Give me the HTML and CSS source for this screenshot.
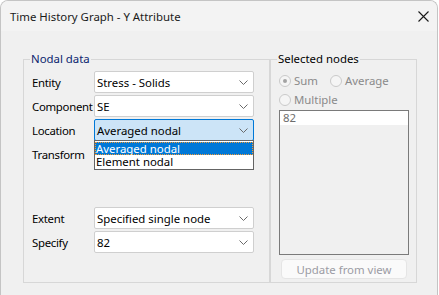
FILE: index.html
```html
<!DOCTYPE html>
<html>
<head>
    <title>Time History Graph - Y Attribute</title>
    <link rel="stylesheet" href="styles.css">
</head>
<body>
    <div class="window">
        <div class="titlebar">
            <span class="title">Time History Graph - Y Attribute</span>
            <svg class="close" width="11" height="11" viewBox="0 0 11 11">
                <path d="M0.5 0.5 L10.5 10.5 M10.5 0.5 L0.5 10.5" stroke="#1a1a1a" stroke-width="1.1" fill="none"/>
            </svg>
        </div>
        <div class="client">
            <fieldset class="group nodal">
                <legend>Nodal data</legend>
                <div class="row">
                    <label>Entity</label>
                    <div class="combo"><span>Stress - Solids</span><svg class="chev" width="9" height="5" viewBox="0 0 9 5"><path d="M0.5 0.5 L4.5 4.5 L8.5 0.5" stroke="#6a6a6a" fill="none"/></svg></div>
                </div>
                <div class="row">
                    <label>Component</label>
                    <div class="combo"><span>SE</span><svg class="chev" width="9" height="5" viewBox="0 0 9 5"><path d="M0.5 0.5 L4.5 4.5 L8.5 0.5" stroke="#6a6a6a" fill="none"/></svg></div>
                </div>
                <div class="row">
                    <label>Location</label>
                    <div class="combo focused"><span>Averaged nodal</span><svg class="chev" width="9" height="5" viewBox="0 0 9 5"><path d="M0.5 0.5 L4.5 4.5 L8.5 0.5" stroke="#6a6a6a" fill="none"/></svg>
                        <div class="droplist">
                            <div class="item selected">Averaged nodal</div>
                            <div class="item">Element nodal</div>
                        </div>
                    </div>
                </div>
                <div class="row">
                    <label>Transform</label>
                </div>
                <div class="spacer"></div>
                <div class="row">
                    <label>Extent</label>
                    <div class="combo"><span>Specified single node</span><svg class="chev" width="9" height="5" viewBox="0 0 9 5"><path d="M0.5 0.5 L4.5 4.5 L8.5 0.5" stroke="#6a6a6a" fill="none"/></svg></div>
                </div>
                <div class="row">
                    <label>Specify</label>
                    <div class="combo"><span>82</span><svg class="chev" width="9" height="5" viewBox="0 0 9 5"><path d="M0.5 0.5 L4.5 4.5 L8.5 0.5" stroke="#6a6a6a" fill="none"/></svg></div>
                </div>
            </fieldset>
            <fieldset class="group selected-nodes">
                <legend>Selected nodes</legend>
                <div class="radios">
                    <span class="radio checked"><i></i>Sum</span>
                    <span class="radio"><i></i>Average</span>
                </div>
                <div class="radios">
                    <span class="radio"><i></i>Multiple</span>
                </div>
                <div class="listbox">
                    <div class="list-item">82</div>
                </div>
                <button disabled>Update from view</button>
            </fieldset>
        </div>
    </div>
</body>
</html>
```

FILE: styles.css
```css
body {
    margin: 0;
    background: #fff;
    font-family: "Noto Sans", "Open Sans", sans-serif;
    font-size: 11.4px;
    color: #000;
}
.window {
    width: 438px;
    height: 295px;
    box-sizing: border-box;
    background: #f0f0f0;
    border: 1px solid #c4c4c4;
    border-bottom: none;
    border-radius: 8px 8px 0 0;
    overflow: hidden;
}
.titlebar {
    height: 30px;
    background: #f3f3f3;
    display: flex;
    align-items: center;
    justify-content: space-between;
    padding: 0 8px 0 9px;
}
.title {
    font-size: 11.4px;
    color: #1a1a1a;
}
.client {
    display: flex;
    padding: 20px 0 0 22px;
}
.group {
    margin: 0;
    box-sizing: border-box;
    border: 1px solid #d7d7d7;
    padding: 0 0 0 6px;
    height: 232px;
}
.group legend {
    padding: 0 1px;
    line-height: 16px;
}
.nodal {
    width: 247px;
    padding-top: 4px;
}
.nodal legend {
    color: #0a1e6e;
}
.row {
    display: flex;
    align-items: center;
    margin-bottom: 2px;
    min-height: 22px;
}
.row label {
    width: 62px;
    padding-left: 2px;
    white-space: nowrap;
    letter-spacing: -0.3px;
}
.combo {
    position: relative;
    width: 160px;
    height: 22px;
    box-sizing: border-box;
    background: #fff;
    border: 1px solid #cfcfcf;
    border-radius: 2px;
    display: flex;
    align-items: center;
    justify-content: space-between;
    padding: 0 5px 0 2px;
}
.combo.focused {
    background: #cce4f7;
    border-color: #0078d7;
    z-index: 2;
}
.chev {
    margin-left: auto;
}
.droplist {
    position: absolute;
    top: 20px;
    left: -1px;
    width: 160px;
    box-sizing: border-box;
    background: #fff;
    border: 1px solid #646464;
    padding: 1px 0;
}
.item {
    line-height: 13px;
    height: 13px;
    padding-left: 1px;
}
.item.selected {
    background: #0078d7;
    color: #fff;
    outline: 1px dotted #f39b35;
    outline-offset: -1px;
}
.spacer {
    height: 40px;
}
.selected-nodes {
    width: 147px;
    padding-top: 4px;
}
.radios {
    display: flex;
    gap: 12px;
    margin-left: 2px;
    height: 19px;
    align-items: center;
}
.radio {
    display: flex;
    align-items: center;
    gap: 3px;
    color: #8a8a8a;
}
.radio i {
    width: 12px;
    height: 12px;
    box-sizing: border-box;
    border: 1px solid #cacaca;
    border-radius: 50%;
    background: #f5f5f5;
    display: flex;
    align-items: center;
    justify-content: center;
}
.radio.checked i::after {
    content: "";
    width: 4px;
    height: 4px;
    border-radius: 50%;
    background: #a3a3a3;
}
.listbox {
    margin: 1px 0 0 2px;
    width: 130px;
    height: 145px;
    box-sizing: border-box;
    border: 1px solid #7a7a7a;
    background: #f0f0f0;
}
.list-item {
    background: #fff;
    height: 14px;
    line-height: 14px;
    padding-left: 3px;
    color: #6d6d6d;
}
button {
    display: block;
    margin: 4px 0 0 4px;
    width: 126px;
    height: 20px;
    font-family: inherit;
    font-size: 11.4px;
    color: #9c9ca4;
    background: #fafafa;
    border: 1px solid #e5e5e5;
    border-radius: 4px;
    padding: 0;
}
```
